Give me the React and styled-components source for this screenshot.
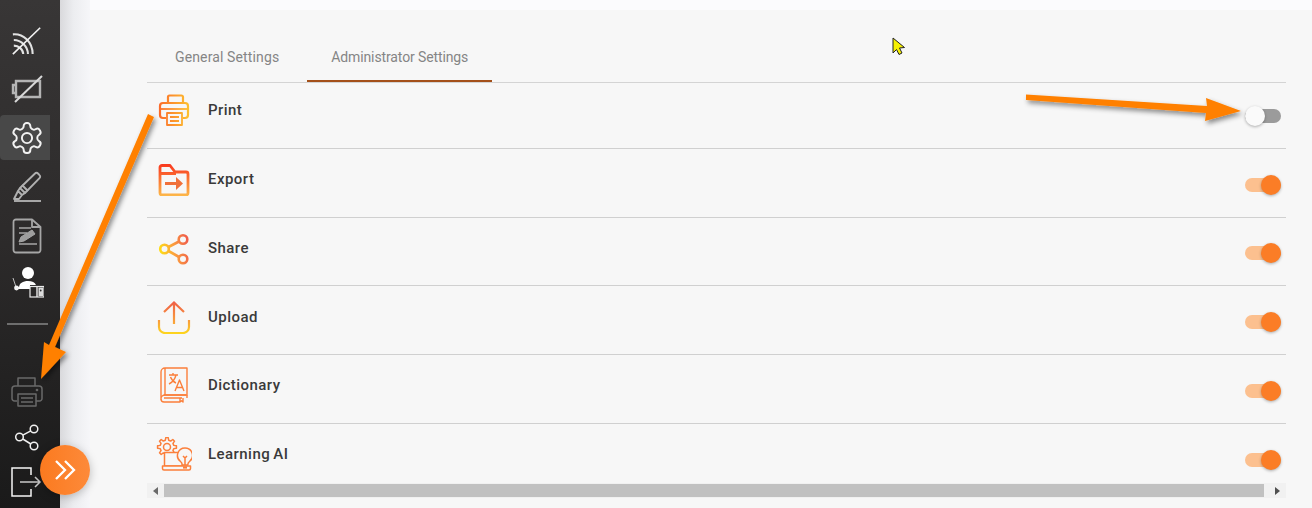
import React from "react";
import styled, { createGlobalStyle } from "styled-components";

const Global = createGlobalStyle`
  html, body { margin: 0; padding: 0; height: 100%; overflow: hidden; background: #f7f7f7; }
  #root { height: 508px; }
  * { box-sizing: border-box; }
`;

const Page = styled.div`
  position: relative;
  display: flex;
  width: 1312px;
  height: 508px;
  overflow: hidden;
  font-family: Roboto, "Liberation Sans", sans-serif;
`;

const Sidebar = styled.nav`
  flex: 0 0 60px;
  display: flex;
  flex-direction: column;
  padding-top: 15px;
  background: linear-gradient(180deg, #383636 0%, #2d2b2b 45%, #1a1a1a 100%);
`;

const NavItem = styled.div`
  width: 50px;
  height: ${(p) => (p.$small ? 45 : p.$active ? 45 : 49)}px;
  margin: ${(p) => (p.$active ? "2px 0" : "0")};
  padding-left: 4px;
  display: flex;
  align-items: center;
  justify-content: center;
  border-radius: 4px 0 0 4px;
  background: ${(p) => (p.$active ? "#484848" : "transparent")};
`;

const NavDivider = styled.hr`
  width: 41px;
  height: 2px;
  margin: 14px 0 44px 7px;
  border: 0;
  background: #6e6e6e;
`;

const Main = styled.main`
  flex: 1;
  min-width: 0;
  padding: 10px 0 0 30px;
  background:
    linear-gradient(90deg, #d9d9dc 0%, #ecedf0 45%, #f6f6f9 100%) left / 30px 100% no-repeat,
    #fbfbfd;
`;

const Content = styled.div`
  height: 498px;
  padding: 0 26px 0 57px;
  background: #f7f7f7;
`;

const Tabs = styled.div`
  display: flex;
  gap: 4px;
  height: 73px;
  padding: 24px 0 0 4px;
  border-bottom: 1px solid #d4d4d4;
`;

const Tab = styled.div`
  height: 48px;
  padding: 0 24px;
  display: flex;
  align-items: center;
  font-size: 14px;
  color: #858585;
  letter-spacing: ${(p) => (p.$active ? "-0.12px" : "0.13px")};
  border-bottom: 2px solid ${(p) => (p.$active ? "#a4501a" : "transparent")};
`;

const List = styled.div`
  height: 400px;
  overflow: hidden;
`;

const Row = styled.div`
  display: flex;
  align-items: flex-start;
  height: ${(p) => p.$h}px;
  border-bottom: ${(p) => (p.$last ? "0" : "1px solid #d0d0d0")};
`;

const IconBox = styled.div`
  flex: 0 0 36px;
  width: 36px;
  height: 36px;
  margin: ${(p) => p.$top}px 0 0 9px;
  display: flex;
  align-items: center;
  justify-content: center;
`;

const Label = styled.div`
  margin: ${(p) => p.$top}px 0 0 16px;
  font-size: 15px;
  line-height: 18px;
  font-weight: 500;
  letter-spacing: 0.45px;
  word-spacing: -1px;
  color: #3a3a3a;
`;

const Track = styled.div`
  position: relative;
  flex: 0 0 36px;
  width: 36px;
  height: 14px;
  margin: ${(p) => p.$top}px 5px 0 auto;
  border-radius: 7px;
  background: ${(p) => (p.$on ? "#fcc08f" : "#9b9b9b")};
`;

const Knob = styled.div`
  position: absolute;
  top: -3px;
  left: ${(p) => (p.$on ? 16 : 0)}px;
  width: 20px;
  height: 20px;
  border-radius: 50%;
  background: ${(p) => (p.$on ? "#fb7d26" : "#fafafa")};
  box-shadow: 0 1px 3px rgba(0, 0, 0, 0.3);
`;

const Scrollbar = styled.div`
  display: flex;
  align-items: center;
  height: 15px;
  background: #f1f1f1;
`;

const ScrollBtn = styled.div`
  flex: 0 0 ${(p) => (p.$right ? 22 : 17)}px;
  height: 15px;
  display: flex;
  align-items: center;
  justify-content: ${(p) => (p.$right ? "flex-end" : "center")};
  padding-right: ${(p) => (p.$right ? 6 : 0)}px;
  &::before {
    content: "";
    border-style: solid;
    border-width: 4px ${(p) => (p.$right ? 0 : "5px")} 4px ${(p) => (p.$right ? "5px" : 0)};
    border-color: transparent ${(p) => (p.$right ? "transparent" : "#6a6a6a")} transparent ${(p) => (p.$right ? "#505050" : "transparent")};
  }
`;

const ScrollThumb = styled.div`
  flex: 1;
  height: 13px;
  background: #c1c1c1;
`;

const Overlay = styled.svg`
  position: absolute;
  inset: 0;
  width: 1312px;
  height: 508px;
  pointer-events: none;
`;

const Fab = styled.button`
  position: absolute;
  left: 40px;
  top: 445px;
  width: 50px;
  height: 50px;
  padding: 0;
  border: 0;
  border-radius: 50%;
  display: flex;
  align-items: center;
  justify-content: center;
  background: linear-gradient(90deg, #fb7a1f, #fd8a3a);
  box-shadow: 0 2px 10px rgba(0, 0, 0, 0.25);
`;

const Navs = {
  wifi: (
    <svg width="32" height="32" viewBox="0 0 34 34" fill="none" stroke="#e2e2e2" strokeWidth="2.200">
      <path d="M2 11c11-1 21 8 21 21M3 17c8 0 15 7 15 15M3 23c5 0 10 4 10 9" />
      <path d="M2 32L31 4" strokeWidth="1.700" stroke="#f2f2f2" />
    </svg>
  ),
  battery: (
    <svg width="34" height="30" viewBox="0 0 34 30" fill="none" stroke="#b4b4b4" strokeWidth="2.400">
      <path d="M6 7h24v16H6zM6 11H3v8h3" />
      <path d="M5 28L32 2" stroke="#d8d8d8" strokeWidth="2" />
    </svg>
  ),
  gear: (
    <svg width="36" height="36" viewBox="0 0 24 24" fill="none" stroke="#f2f2f2" strokeWidth="1.300" strokeLinejoin="round">
      <path d="M12.220 2h-.44a2 2 0 0 0-2 2v.18a2 2 0 0 1-1 1.730l-.43.250a2 2 0 0 1-2 0l-.15-.08a2 2 0 0 0-2.730.730l-.22.380a2 2 0 0 0 .73 2.730l.15.100a2 2 0 0 1 1 1.720v.510a2 2 0 0 1-1 1.740l-.15.090a2 2 0 0 0-.73 2.730l.22.380a2 2 0 0 0 2.730.730l.15-.08a2 2 0 0 1 2 0l.43.250a2 2 0 0 1 1 1.730V20a2 2 0 0 0 2 2h.44a2 2 0 0 0 2-2v-.18a2 2 0 0 1 1-1.730l.43-.25a2 2 0 0 1 2 0l.15.080a2 2 0 0 0 2.730-.73l.22-.39a2 2 0 0 0-.73-2.730l-.15-.08a2 2 0 0 1-1-1.740v-.5a2 2 0 0 1 1-1.740l.15-.09a2 2 0 0 0 .73-2.730l-.22-.38a2 2 0 0 0-2.730-.73l-.15.080a2 2 0 0 1-2 0l-.43-.25a2 2 0 0 1-1-1.730V4a2 2 0 0 0-2-2z" />
      <circle cx="12" cy="12" r="3.400" />
    </svg>
  ),
  pen: (
    <svg width="32" height="32" viewBox="0 0 32 32" fill="none" stroke="#b0b0b0" strokeWidth="1.900" strokeLinejoin="round">
      <path d="M9 17L24 2.500a2 2 0 0 1 3 0l1.500 1.600a2 2 0 0 1 0 3L14 22z" />
      <path d="M9 17l-2 3 4 4 3-2M7 20l-4 8h5l3-4M11 14l6 6" />
      <path d="M3 30h27" strokeWidth="1.500" stroke="#d0d0d0" />
    </svg>
  ),
  doc: (
    <svg width="30" height="36" viewBox="0 0 30 36" fill="none" stroke="#a6a6a6" strokeWidth="1.800" strokeLinejoin="round">
      <path d="M4 1.500h16L28.500 9v23a2.500 2.500 0 0 1-2.500 2.500H4A2.500 2.500 0 0 1 1.500 32V4A2.500 2.500 0 0 1 4 1.500z" />
      <path d="M20 1.500V9h8.500" />
      <path d="M7 10h12M7 15h8M7 26h18" strokeWidth="1.300" />
      <path d="M7 24l2-5 11-7 3 4-11 7z" fill="#9e9e9e" strokeWidth="1" />
    </svg>
  ),
  teacher: (
    <svg width="32" height="32" viewBox="0 0 32 32" style={{ marginTop: -5, marginLeft: 2 }}>
      <circle cx="16" cy="7" r="6" fill="#fff" />
      <path d="M7 22c0-5 4-7 9-7 4 0 7 1.500 8 4h-6v4H7z" fill="#fff" />
      <path d="M1 12l3 9" stroke="#cfcfcf" strokeWidth="0.900" />
      <circle cx="4.500" cy="22" r="2.400" fill="#f4f4f4" />
      <path d="M6 22l4 0" stroke="#fff" strokeWidth="1.800" />
      <rect x="18" y="20.500" width="14" height="10.500" fill="none" stroke="#eaeaea" strokeWidth="1.200" />
      <rect x="24.300" y="20.500" width="1.400" height="10.500" fill="#eaeaea" />
      <rect x="26.500" y="21.500" width="4.500" height="8.500" fill="#dcdcdc" />
      <circle cx="28.700" cy="24.500" r="0.900" fill="#2d2d2d" />
    </svg>
  ),
  printer: (
    <svg width="32" height="32" viewBox="0 0 32 32" fill="none" stroke="#696969" strokeWidth="1.500" strokeLinejoin="round">
      <path d="M7 10V2h17v8" />
      <path d="M6 25H3.500A2.500 2.500 0 0 1 1 22.500V13a3 3 0 0 1 3-3h24a3 3 0 0 1 3 3v9.500a2.500 2.500 0 0 1-2.500 2.500H25" />
      <path d="M7 18h18v12H7zM10 22h12M10 26h12" />
      <circle cx="26" cy="14" r="0.600" fill="#696969" />
    </svg>
  ),
  share: (
    <svg width="26" height="28" viewBox="0 0 26 28" fill="none" stroke="#f0f0f0" strokeWidth="1.500">
      <circle cx="20" cy="6" r="3.800" />
      <circle cx="5.500" cy="14" r="3.800" />
      <circle cx="20" cy="23" r="3.800" />
      <path d="M8.800 12.200l8-4.400M8.800 16l8 5" />
    </svg>
  ),
  exit: (
    <svg width="32" height="32" viewBox="0 0 32 32" fill="none" stroke="#f6f6f6" strokeWidth="1.500" style={{ marginLeft: -2 }}>
      <path d="M21 9V2H2v28h19v-7" />
      <path d="M10 16h20M25 11l5 5-5 5" stroke="#c9c9c9" />
    </svg>
  ),
};

const gearPoints = (cx, cy, rOuter, rInner, teeth) => {
  const pts = [];
  const step = (Math.PI * 2) / teeth;
  for (let i = 0; i < teeth; i++) {
    const a = i * step;
    const w = step * 0.2;
    [
      [a - w * 1.5, rInner],
      [a - w * 0.8, rOuter],
      [a + w * 0.8, rOuter],
      [a + w * 1.5, rInner],
    ].forEach(([t, r]) => {
      pts.push(`${(cx + r * Math.cos(t)).toFixed(2)},${(cy + r * Math.sin(t)).toFixed(2)}`);
    });
  }
  return pts.join(" ");
};

const Icons = {
  print: (
    <svg width="32" height="32" viewBox="0 0 32 32" fill="none" strokeLinejoin="round">
      <defs>
        <linearGradient id="gPrint" gradientUnits="userSpaceOnUse" x1="1" y1="16" x2="31" y2="16">
          <stop offset="0" stopColor="#fb6a2a" />
          <stop offset="1" stopColor="#fdc12f" />
        </linearGradient>
      </defs>
      <g stroke="url(#gPrint)" strokeWidth="2.200">
        <path d="M10 9V3a1.500 1.500 0 0 1 1.500-1.500h12A1.500 1.500 0 0 1 25 3v6" />
        <path d="M8 24H5a3 3 0 0 1-3-3V12a3 3 0 0 1 3-3h22a3 3 0 0 1 3 3v9a3 3 0 0 1-3 3h-2" />
        <path d="M2 15h28" strokeWidth="1.800" />
        <path d="M9 19h15v12H9zM12 23h9M12 27h9" strokeWidth="1.800" />
      </g>
    </svg>
  ),
  export: (
    <svg width="32" height="32" viewBox="0 0 32 32" fill="none">
      <defs>
        <linearGradient id="gExport" gradientUnits="userSpaceOnUse" x1="16" y1="0" x2="16" y2="32">
          <stop offset="0" stopColor="#f9381f" />
          <stop offset="1" stopColor="#fdb84a" />
        </linearGradient>
      </defs>
      <path d="M2 13V3.500A2 2 0 0 1 4 1.500h8l5 6.500h11a2 2 0 0 1 2 2v19a2 2 0 0 1-2 2H4a2 2 0 0 1-2-2z" stroke="url(#gExport)" strokeWidth="2.800" strokeLinejoin="round" />
      <path d="M2 9.500h16" stroke="url(#gExport)" strokeWidth="3" />
      <path d="M7 19.500h14" stroke="#f0703a" strokeWidth="3" />
      <path d="M18 13l7 6.500-7 6.500z" fill="#f0703a" />
    </svg>
  ),
  share: (
    <svg width="32" height="32" viewBox="0 0 32 32" fill="none" strokeWidth="2.600">
      <defs>
        <linearGradient id="gShare" gradientUnits="userSpaceOnUse" x1="2" y1="18" x2="30" y2="12">
          <stop offset="0" stopColor="#fedc16" />
          <stop offset="0.500" stopColor="#fb9d3e" />
          <stop offset="1" stopColor="#f0604a" />
        </linearGradient>
      </defs>
      <g stroke="url(#gShare)">
        <circle cx="25" cy="6.500" r="4.300" />
        <circle cx="6.500" cy="16" r="4.300" />
        <circle cx="25" cy="26" r="4.300" />
        <path d="M10.500 14L21 8.500M10.500 18L21 24" />
      </g>
    </svg>
  ),
  upload: (
    <svg width="34" height="34" viewBox="0 0 34 34" fill="none" strokeWidth="2.200">
      <defs>
        <linearGradient id="gUp" gradientUnits="userSpaceOnUse" x1="17" y1="1" x2="17" y2="33">
          <stop offset="0" stopColor="#ef5c48" />
          <stop offset="0.650" stopColor="#f9a13c" />
          <stop offset="1" stopColor="#fdd41e" />
        </linearGradient>
      </defs>
      <path d="M2 20v7a6 6 0 0 0 6 6h18a6 6 0 0 0 6-6v-7M17 24V3M7 12L17 2.500 27 12" stroke="url(#gUp)" />
    </svg>
  ),
  dict: (
    <svg width="32" height="36" viewBox="0 0 32 36" fill="none" stroke="#fb7f3b" strokeWidth="1.400" strokeLinejoin="round">
      <path d="M7 1h22v27H7a4 4 0 0 0-4 4V5a4 4 0 0 1 4-4z" />
      <path d="M7 1v27M3 32a3 3 0 0 0 3 3h16M28 28H6M6 31h18M29 28v3M22 31v4l1.500-1.200L25 35v-4" />
      <path d="M11 8h9M15 6v2M18 8c-1 4-3 7-7 9M12.500 10c1 2.500 3 5 5.500 6" />
      <path d="M17 24l4.500-11L26 24M18.500 20.500h6" />
    </svg>
  ),
  ai: (
    <svg width="36" height="34" viewBox="0 0 36 34" fill="none" stroke="#fb7f3b" strokeWidth="1.500" strokeLinejoin="round">
      <polygon points={gearPoints(11, 10, 9.500, 7, 8)} />
      <circle cx="11" cy="10" r="3.500" />
      <rect x="8.500" y="15.500" width="18" height="13.500" fill="#f7f7f7" />
      <path d="M6.500 29h28v2.500a1.500 1.500 0 0 1-1.500 1.500H8a1.500 1.500 0 0 1-1.500-1.500z" fill="#f7f7f7" />
      <path d="M29 11a7.500 7.500 0 0 1 4.500 13.500c-1 .8-1.700 1.800-1.700 3.500h-5.600c0-1.700-.7-2.700-1.700-3.500A7.500 7.500 0 0 1 29 11z" fill="#f7f7f7" />
      <path d="M27 19l2 2 2-2M29 21v7" />
      <path d="M27 30.500h4" strokeWidth="2.200" />
    </svg>
  ),
};

const rows = [
  { name: "Print", icon: "print", h: 66, icon_t: 9, label_t: 18, sw: 26, on: false },
  { name: "Export", icon: "export", h: 69, icon_t: 13, label_t: 21, sw: 29, on: true },
  { name: "Share", icon: "share", h: 68, icon_t: 13, label_t: 21, sw: 28, on: true },
  { name: "Upload", icon: "upload", h: 69, icon_t: 13, label_t: 22, sw: 29, on: true },
  { name: "Dictionary", icon: "dict", h: 69, icon_t: 12, label_t: 21, sw: 29, on: true },
  { name: "Learning AI", icon: "ai", h: 69, icon_t: 12, label_t: 21, sw: 29, on: true, last: true },
];

export default function App() {
  return (
    <Page>
      <Global />
      <Sidebar>
        <NavItem>{Navs.wifi}</NavItem>
        <NavItem>{Navs.battery}</NavItem>
        <NavItem $active>{Navs.gear}</NavItem>
        <NavItem>{Navs.pen}</NavItem>
        <NavItem>{Navs.doc}</NavItem>
        <NavItem>{Navs.teacher}</NavItem>
        <NavDivider />
        <NavItem $small>{Navs.printer}</NavItem>
        <NavItem $small>{Navs.share}</NavItem>
        <NavItem $small>{Navs.exit}</NavItem>
      </Sidebar>
      <Main>
        <Content>
          <Tabs>
            <Tab>General Settings</Tab>
            <Tab $active>Administrator Settings</Tab>
          </Tabs>
          <List>
            {rows.map((r) => (
              <Row key={r.name} $h={r.h} $last={r.last}>
                <IconBox $top={r.icon_t}>{Icons[r.icon]}</IconBox>
                <Label $top={r.label_t}>{r.name}</Label>
                <Track $on={r.on} $top={r.sw}>
                  <Knob $on={r.on} />
                </Track>
              </Row>
            ))}
          </List>
          <Scrollbar>
            <ScrollBtn />
            <ScrollThumb />
            <ScrollBtn $right />
          </Scrollbar>
        </Content>
      </Main>
      <Overlay viewBox="0 0 1312 508">
        <defs>
          <filter id="arrowShadow" x="-20%" y="-20%" width="140%" height="140%">
            <feDropShadow dx="2" dy="3" stdDeviation="2.500" floodColor="#000" floodOpacity="0.45" />
          </filter>
        </defs>
        <g fill="#ff8000" filter="url(#arrowShadow)">
          <polygon points="1026,94.500 1207,106 1206,98 1241,111 1205,121 1206,113 1026,100" />
          <polygon points="148,114 154,117 55,347 66,352 41,379 44,342 49,345" />
        </g>
        <path d="M893 38v15l3.500-3.500 2.500 5 3-1.500-2.500-5 5-.5z" fill="#f6f000" stroke="#222" strokeWidth="1" />
      </Overlay>
      <Fab aria-label="Expand">
        <svg width="24" height="24" viewBox="0 0 24 24" fill="none" stroke="#fff" strokeWidth="2.300">
          <path d="M3 3l9 9-9 9M12 3l9 9-9 9" />
        </svg>
      </Fab>
    </Page>
  );
}
